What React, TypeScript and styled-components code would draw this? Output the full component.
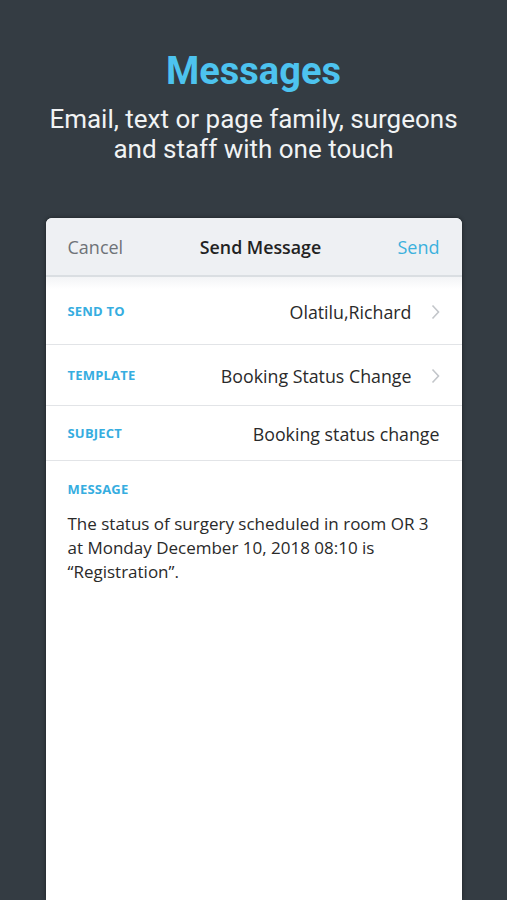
import styled, { createGlobalStyle } from 'styled-components';

const GlobalStyle = createGlobalStyle`
  html, body {
    margin: 0;
    padding: 0;
    background: #343c43;
  }
  * {
    box-sizing: border-box;
  }
`;

const Page = styled.div`
  width: 507px;
  height: 900px;
  overflow: hidden;
  background: #343c43;
  display: flex;
  flex-direction: column;
  align-items: center;
`;

const Hero = styled.header`
  display: flex;
  flex-direction: column;
  align-items: center;
  padding-top: 49px;
  text-align: center;
  font-family: Roboto, 'Liberation Sans', sans-serif;
`;

const Title = styled.h1`
  margin: 0;
  font-size: 38px;
  line-height: 45px;
  font-weight: 700;
  color: #4dc3ef;
`;

const Subtitle = styled.p`
  margin: 10px 0 0;
  font-size: 26px;
  line-height: 30px;
  font-weight: 400;
  color: #f1f3f4;
`;

const Card = styled.section`
  margin-top: 54px;
  width: 416px;
  flex: 1;
  background: #fff;
  border-radius: 6px 6px 0 0;
  overflow: hidden;
  box-shadow: 0 0 4px rgba(0, 0, 0, 0.45);
  font-family: 'Open Sans', 'Liberation Sans', sans-serif;
  display: flex;
  flex-direction: column;
`;

const NavBar = styled.div`
  height: 59px;
  display: flex;
  align-items: center;
  justify-content: space-between;
  padding: 0 22px;
  background: #eef0f3;
  border-bottom: 2px solid #dadee2;
  font-size: 18px;
`;

const NavButton = styled.span<{ $accent?: boolean }>`
  color: ${({ $accent }) => ($accent ? '#3bb1dd' : '#6e7378')};
  width: ${({ $accent }) => ($accent ? '68px' : '82px')};
  text-align: ${({ $accent }) => ($accent ? 'right' : 'left')};
`;

const NavTitle = styled.span`
  color: #222;
  font-weight: 600;
  font-size: 17.8px;
`;

const Fields = styled.div`
  display: flex;
  flex-direction: column;
  background: linear-gradient(#f3f4f6, #fff 12px);
`;

const Row = styled.div<{ $height: number }>`
  height: ${({ $height }) => $height}px;
  display: flex;
  align-items: center;
  justify-content: space-between;
  padding: 0 22px;
  border-bottom: 1px solid #e2e4e7;
`;

const Label = styled.span`
  color: #36ade0;
  font-size: 13px;
  font-weight: 700;
  letter-spacing: 0.2px;
`;

const Value = styled.span`
  display: flex;
  align-items: center;
  gap: 19px;
  color: #2a2a2a;
  font-size: 17.8px;
  padding-top: 2px;
`;

const Chevron = styled.svg`
  width: 9px;
  height: 16px;
`;

const MessageBlock = styled.div`
  padding: 19px 22px 0;
  display: flex;
  flex-direction: column;
  gap: 14px;
`;

const MessageText = styled.p`
  margin: 0;
  color: #2a2a2a;
  font-size: 17px;
  line-height: 24px;
`;

function Arrow() {
  return (
    <Chevron viewBox="0 0 9 16">
      <path d="M1.5 1.5 L7.5 8 L1.5 14.5" fill="none" stroke="#c3c6ca" strokeWidth="1.6" />
    </Chevron>
  );
}

export default function App() {
  return (
    <>
      <GlobalStyle />
      <Page>
        <Hero>
          <Title>Messages</Title>
          <Subtitle>
            Email, text or page family, surgeons
            <br />
            and staff with one touch
          </Subtitle>
        </Hero>
        <Card>
          <NavBar>
            <NavButton>Cancel</NavButton>
            <NavTitle>Send Message</NavTitle>
            <NavButton $accent>Send</NavButton>
          </NavBar>
          <Fields>
            <Row $height={68}>
              <Label>SEND TO</Label>
              <Value>
                Olatilu,Richard
                <Arrow />
              </Value>
            </Row>
            <Row $height={61}>
              <Label>TEMPLATE</Label>
              <Value>
                Booking Status Change
                <Arrow />
              </Value>
            </Row>
            <Row $height={55}>
              <Label>SUBJECT</Label>
              <Value>Booking status change</Value>
            </Row>
          </Fields>
          <MessageBlock>
            <Label>MESSAGE</Label>
            <MessageText>
              The status of surgery scheduled in room OR 3
              <br />
              at Monday December 10, 2018 08:10 is
              <br />
              “Registration”.
            </MessageText>
          </MessageBlock>
        </Card>
      </Page>
    </>
  );
}
